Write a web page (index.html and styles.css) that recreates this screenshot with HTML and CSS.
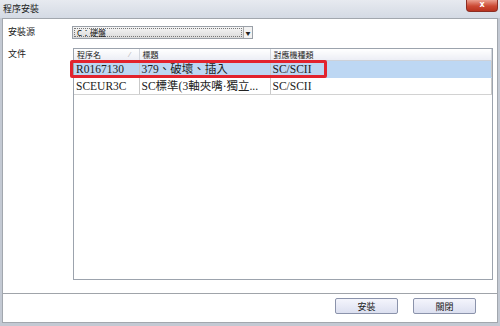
FILE: index.html
```html
<!DOCTYPE html>
<html lang="zh-Hant">
<head>
    <meta charset="UTF-8">
    <title>程序安裝</title>
    <link rel="stylesheet" href="styles.css">
</head>
<body>
    <div class="titlebar">
        <span class="title">程序安裝</span>
        <span class="close">x</span>
    </div>
    <div class="dialog">
        <div class="content">
            <div class="field">
                <label class="field-label">安裝源</label>
                <div class="combo">
                    <span class="combo-text">C：硬盤</span>
                    <span class="combo-arrow">▼</span>
                </div>
            </div>
            <div class="field field-list">
                <label class="field-label">文件</label>
                <div class="listview">
                    <table>
                        <colgroup>
                            <col class="col-name">
                            <col class="col-title">
                            <col>
                        </colgroup>
                        <thead>
                            <tr>
                                <th>程序名<span class="sort">⁄</span></th>
                                <th>標題</th>
                                <th>對應機種類</th>
                            </tr>
                        </thead>
                        <tbody>
                            <tr class="selected">
                                <td>R0167130</td>
                                <td>379、破壞、插入</td>
                                <td>SC/SCII</td>
                            </tr>
                            <tr>
                                <td>SCEUR3C</td>
                                <td>SC標準(3軸夾嘴·獨立...</td>
                                <td>SC/SCII</td>
                            </tr>
                        </tbody>
                    </table>
                    <div class="mark"></div>
                </div>
            </div>
        </div>
        <div class="footer">
            <button>安裝</button>
            <button>關閉</button>
        </div>
    </div>
</body>
</html>
```

FILE: styles.css
```css
body {
    margin: 0;
    width: 500px;
    height: 326px;
    overflow: hidden;
    background: #c3c9d3;
    font-family: "Noto Sans CJK TC", sans-serif;
    color: #222;
}
.titlebar {
    height: 18px;
    display: flex;
    align-items: flex-start;
    background: linear-gradient(#e7eaf0, #d4dae4);
}
.title {
    font-size: 9px;
    line-height: 12px;
    padding: 3px 0 0 3px;
}
.close {
    margin-left: auto;
    margin-right: 2px;
    width: 30px;
    height: 11px;
    border: 1px solid #8c2d22;
    border-top: none;
    border-radius: 0 0 4px 4px;
    background: linear-gradient(#eba090, #cc4a34 55%, #b8321e);
    color: #fff;
    font: bold 8px "DejaVu Sans", sans-serif;
    line-height: 10px;
    text-align: center;
}
.dialog {
    margin-left: 2px;
    width: 496px;
    height: 305px;
    box-sizing: border-box;
    border: 1px solid #a2a7ae;
    background: #fff;
    display: flex;
    flex-direction: column;
}
.content {
    flex: 1;
    padding: 7px 4px 0 5px;
}
.field {
    display: flex;
}
.field-label {
    width: 65px;
    font-size: 9px;
    line-height: 12px;
}
.combo {
    width: 181px;
    height: 13px;
    margin-left: -1px;
    box-sizing: border-box;
    border: 1px solid #9aa0a8;
    background: linear-gradient(#f6f6f6, #dadada);
    display: flex;
}
.combo-text {
    flex: 1;
    margin: 1px;
    border: 1px dotted #777;
    font-size: 8px;
    line-height: 7px;
    padding-left: 2px;
    color: #111;
}
.combo-arrow {
    width: 8px;
    border-left: 1px solid #a8a8a8;
    background: #f2f2f2;
    font-size: 5px;
    line-height: 11px;
    text-align: center;
}
.field-list {
    margin-top: 9px;
}
.listview {
    position: relative;
    width: 420px;
    height: 232px;
    box-sizing: border-box;
    border: 1px solid #9ca3ad;
}
table {
    width: 100%;
    border-collapse: collapse;
    table-layout: fixed;
}
.col-name {
    width: 65px;
}
.col-title {
    width: 131px;
}
th {
    position: relative;
    height: 11px;
    padding: 0 3px;
    font-size: 8px;
    font-weight: normal;
    line-height: 11px;
    text-align: left;
    background: linear-gradient(#ffffff, #eceef5);
    border-right: 1px solid #d3d7de;
    border-bottom: 1px solid #cdd1d8;
}
.sort {
    position: absolute;
    right: 8px;
    top: 0;
    color: #aaa;
    font-size: 7px;
}
td {
    height: 16px;
    padding: 0 2px;
    font-family: "Liberation Serif", "Noto Sans CJK TC", serif;
    font-size: 11.5px;
    line-height: 16px;
    white-space: nowrap;
    border-right: 1px solid #c9c9c9;
    border-bottom: 1px solid #d2d2d2;
}
.selected td {
    background: #bdd7f3;
    border-bottom-color: #bdd7f3;
}
.mark {
    position: absolute;
    left: -4px;
    top: 11px;
    width: 257px;
    height: 18px;
    box-sizing: border-box;
    border: 3px solid #e2232e;
    border-radius: 2px;
}
.footer {
    height: 29px;
    box-sizing: border-box;
    border-top: 1px solid #a0a4aa;
    display: flex;
    justify-content: flex-end;
    align-items: flex-start;
    gap: 15px;
    padding: 4px 21px 0 0;
}
button {
    width: 63px;
    height: 16px;
    padding: 0;
    border: 1px solid #8b93ab;
    border-radius: 2px;
    background: linear-gradient(#f4f5fc, #dce0f0);
    font-family: "Noto Sans CJK TC", sans-serif;
    font-size: 9px;
    color: #222;
}
```
